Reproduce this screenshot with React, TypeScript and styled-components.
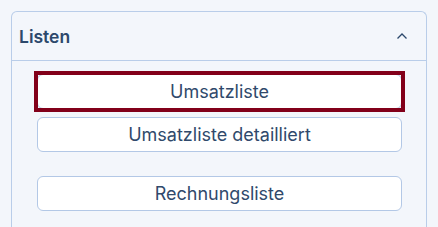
import React from "react";
import styled, { createGlobalStyle } from "styled-components";

const Global = createGlobalStyle`
  html, body { margin: 0; padding: 0; background: #f3f6fb; }
  body { font-family: Inter, "Noto Sans", sans-serif; }
`;

const Page = styled.div`
  padding: 11px 11px 0 11px;
  width: 438px;
  height: 227px;
  box-sizing: border-box;
  overflow: hidden;
`;

const Panel = styled.section`
  border: 1px solid #b9cde9;
  border-bottom: none;
  border-radius: 6px 6px 0 0;
  background: #f3f6fb;
  height: 240px;
  box-sizing: border-box;
`;

const Header = styled.div`
  display: flex;
  align-items: center;
  justify-content: space-between;
  height: 48px;
  padding: 0 18px 0 7px;
  border-bottom: 1px solid #b9cde9;
`;

const Title = styled.h2`
  margin: 0;
  font-size: 17.5px;
  font-weight: 600;
  color: #2c486b;
`;

const Chevron = styled.svg`
  display: block;
`;

const Body = styled.div`
  display: flex;
  flex-direction: column;
  gap: 8px;
  padding: 13px 24px 0 25px;
`;

const ListButton = styled.button<{ $focused?: boolean; $spaced?: boolean }>`
  position: relative;
  height: 35px;
  margin-top: ${(p) => (p.$spaced ? "16px" : "0")};
  padding: 0;
  border: 1px solid #b3c8e6;
  border-radius: 6px;
  background: #ffffff;
  font-family: Inter, "Noto Sans", sans-serif;
  font-size: 18px;
  font-weight: 400;
  color: #30496b;
  cursor: pointer;
  &::after {
    content: "";
    display: ${(p) => (p.$focused ? "block" : "none")};
    position: absolute;
    inset: -4px;
    border: 4px solid #82001a;
  }
`;

export default function App() {
  return (
    <>
      <Global />
      <Page>
        <Panel>
          <Header>
            <Title>Listen</Title>
            <Chevron width="12" height="8" viewBox="0 0 12 8" fill="none">
              <path d="M1.5 6.5 L6 2 L10.5 6.5" stroke="#2c486b" strokeWidth="1.3" />
            </Chevron>
          </Header>
          <Body>
            <ListButton $focused>Umsatzliste</ListButton>
            <ListButton>Umsatzliste detailliert</ListButton>
            <ListButton $spaced>Rechnungsliste</ListButton>
          </Body>
        </Panel>
      </Page>
    </>
  );
}
